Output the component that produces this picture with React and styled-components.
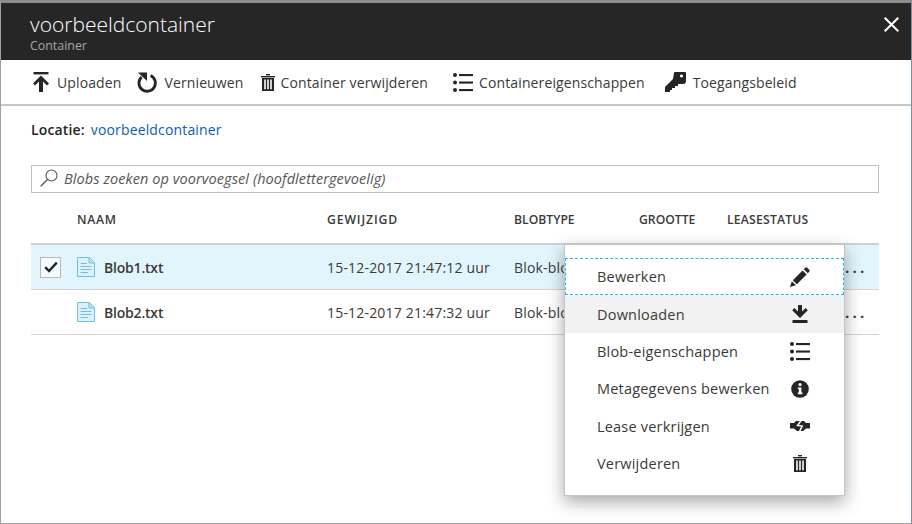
import styled, { createGlobalStyle } from "styled-components";

const GlobalStyle = createGlobalStyle`
  html, body {
    margin: 0;
    padding: 0;
    background: #fff;
  }
  body {
    font-family: "Open Sans", "Noto Sans", sans-serif;
    color: #252525;
  }
`;

const toolbarItems = [
  { label: "Uploaden", icon: <UploadIcon />, gap: 16, iconGap: 8 },
  { label: "Vernieuwen", icon: <RefreshIcon />, gap: 18, iconGap: 7 },
  { label: "Container verwijderen", icon: <TrashIcon size={14} height={17} />, gap: 25, iconGap: 5 },
  { label: "Containereigenschappen", icon: <ListIcon size={20} />, gap: 20, iconGap: 6 },
  { label: "Toegangsbeleid", icon: <KeyIcon />, gap: 0, iconGap: 7 },
];

const tableColumns = [
  { label: "NAAM", spacing: 0.7 },
  { label: "GEWIJZIGD", spacing: 0.9 },
  { label: "BLOBTYPE", spacing: 0 },
  { label: "GROOTTE", spacing: 0 },
  { label: "LEASESTATUS", spacing: 0.2 },
];

const blobs = [
  { name: "Blob1.txt", modified: "15-12-2017 21:47:12 uur", selected: true },
  { name: "Blob2.txt", modified: "15-12-2017 21:47:32 uur", selected: false },
];

const menuItems = [
  { label: "Bewerken", icon: <PencilIcon />, focused: true },
  { label: "Downloaden", icon: <DownloadIcon />, hovered: true },
  { label: "Blob-eigenschappen", icon: <ListIcon size={20} /> },
  { label: "Metagegevens bewerken", icon: <InfoIcon /> },
  { label: "Lease verkrijgen", icon: <LeaseIcon /> },
  { label: "Verwijderen", icon: <TrashIcon size={14} height={17} /> },
];

function UploadIcon() {
  return (
    <svg width="16" height="20" viewBox="0 0 16 20" fill="#252525">
      <rect x="0.5" y="0" width="15" height="2.4" />
      <path d="M8 3.6 L16 11.4 L14 13.4 L10 9.6 L10 20 L6 20 L6 9.6 L2 13.4 L0 11.4 Z" />
    </svg>
  );
}

function RefreshIcon() {
  return (
    <svg width="20" height="21" viewBox="0 0 20 21" fill="none">
      <path d="M4.6 5 A8.2 8.2 0 1 0 13.6 3.6" stroke="#252525" strokeWidth="2.8" />
      <path d="M1 0.5 L10 0.5 L10 9 Z" fill="#252525" />
    </svg>
  );
}

function TrashIcon({ size, height }) {
  return (
    <svg width={size} height={height} viewBox="0 0 14 17" fill="#252525">
      <rect x="5" y="0" width="4" height="1.4" />
      <rect x="0" y="2" width="14" height="1.4" />
      <path d="M1 4 H13 V17 H1 Z M3.2 5.6 V15.2 H4.8 V5.6 Z M6.2 5.6 V15.2 H7.8 V5.6 Z M9.2 5.6 V15.2 H10.8 V5.6 Z" fillRule="evenodd" />
    </svg>
  );
}

function ListIcon({ size }) {
  return (
    <svg width={size} height={size * 0.95} viewBox="0 0 20 19" fill="#252525">
      <circle cx="2" cy="2" r="2" />
      <circle cx="2" cy="9.5" r="2" />
      <circle cx="2" cy="17" r="2" />
      <rect x="6" y="1" width="14" height="2.1" />
      <rect x="6" y="8.5" width="14" height="2.1" />
      <rect x="6" y="16" width="14" height="2.1" />
    </svg>
  );
}

function KeyIcon() {
  return (
    <svg width="21" height="20" viewBox="0 0 21 20" fill="#252525">
      <path d="M9 1 Q9 0 10 0 H20 Q21 0 21 1 V9 Q21 12 18 12 H13 V14 H10 V16 H7 V18 H5 V20 H0 V15 L8 7 Z M16.5 2.4 a1.6 1.6 0 1 0 0.01 0 Z" fillRule="evenodd" />
    </svg>
  );
}

function SearchIcon() {
  return (
    <svg width="18" height="18" viewBox="0 0 18 18" fill="none" stroke="#555">
      <circle cx="11.5" cy="6.5" r="5.5" strokeWidth="1.1" />
      <path d="M7.5 10.5 L0.7 17.3" strokeWidth="1.3" />
    </svg>
  );
}

function FileIcon() {
  return (
    <svg width="18" height="20" viewBox="0 0 18 20">
      <path d="M0.5 0.5 H12.5 L17.5 5.5 V19.5 H0.5 Z" fill="#dff0f9" stroke="#6cc0e6" />
      <path d="M12 0.5 V6 H17.5" fill="#b8e0f3" stroke="#6cc0e6" />
      <path d="M3.5 6.5 H10 M3.5 9.5 H14.5 M3.5 12.5 H14.5 M3.5 15.5 H11" stroke="#6cc0e6" strokeWidth="1" />
    </svg>
  );
}

function CheckIcon() {
  return (
    <svg width="14" height="12" viewBox="0 0 14 12" fill="none">
      <path d="M1.2 6.2 L5 10 L12.8 1.6" stroke="#252525" strokeWidth="2.4" />
    </svg>
  );
}

function PencilIcon() {
  return (
    <svg width="20" height="20" viewBox="0 0 20 20" fill="#252525">
      <path d="M0 20 L1.8 14.2 L5.8 18.2 Z" />
      <path d="M2.8 13.2 L12.6 3.4 L16.6 7.4 L6.8 17.2 Z" />
      <path d="M13.8 2.2 L15.2 0.8 Q16.2 -0.1 17.2 0.8 L19.2 2.8 Q20.1 3.8 19.2 4.8 L17.8 6.2 Z" />
    </svg>
  );
}

function DownloadIcon() {
  return (
    <svg width="16" height="18" viewBox="0 0 16 18" fill="#252525">
      <path d="M6 0 H10 V6.4 L13.6 3 L15.8 5.2 L8 13 L0.2 5.2 L2.4 3 L6 6.4 Z" />
      <rect x="0.5" y="15" width="15" height="3" />
    </svg>
  );
}

function InfoIcon() {
  return (
    <svg width="18" height="18" viewBox="0 0 18 18">
      <circle cx="9" cy="9" r="8.8" fill="#252525" />
      <circle cx="9" cy="4.6" r="1.6" fill="#fff" />
      <path d="M6.8 7.4 H10.4 V12.6 H11.4 V14.2 H6.8 V12.6 H7.8 V9 H6.8 Z" fill="#fff" />
    </svg>
  );
}

function LeaseIcon() {
  return (
    <svg width="20" height="12" viewBox="0 0 20 12">
      <path d="M0 3 H4 L6 1 H14 L16 3 H20 V8.4 H16 L13 11 H7 L4 8.4 H0 Z" fill="#252525" />
      <path d="M11.4 0 L7.6 5.4 L12.2 6 L9.2 12" fill="none" stroke="#fff" strokeWidth="1.5" />
    </svg>
  );
}

function CloseIcon() {
  return (
    <svg width="15" height="15" viewBox="0 0 15 15" fill="none">
      <path d="M0.7 0.7 L14.3 14.3 M14.3 0.7 L0.7 14.3" stroke="#fff" strokeWidth="2" />
    </svg>
  );
}

export default function App() {
  return (
    <>
      <GlobalStyle />
      <Blade>
        <Header>
          <div>
            <Title>voorbeeldcontainer</Title>
            <Subtitle>Container</Subtitle>
          </div>
          <CloseButton>
            <CloseIcon />
          </CloseButton>
        </Header>
        <Toolbar>
          {toolbarItems.map((item) => (
            <ToolbarButton key={item.label} $gap={item.gap} $iconGap={item.iconGap}>
              {item.icon}
              <span>{item.label}</span>
            </ToolbarButton>
          ))}
        </Toolbar>
        <Content>
          <Location>
            <strong>Locatie:</strong>
            <a>voorbeeldcontainer</a>
          </Location>
          <SearchBox>
            <SearchIcon />
            <span>Blobs zoeken op voorvoegsel (hoofdlettergevoelig)</span>
          </SearchBox>
          <TableHead>
            <span />
            {tableColumns.map((column) => (
              <HeadCell key={column.label} $spacing={column.spacing}>
                {column.label}
              </HeadCell>
            ))}
            <span />
          </TableHead>
          {blobs.map((blob) => (
            <TableRow key={blob.name} $selected={blob.selected}>
              <span>
                {blob.selected && (
                  <Checkbox>
                    <CheckIcon />
                  </Checkbox>
                )}
              </span>
              <NameCell>
                <FileIcon />
                <b>{blob.name}</b>
              </NameCell>
              <span>{blob.modified}</span>
              <span>Blok-blob</span>
              <span />
              <span />
              <Dots>...</Dots>
            </TableRow>
          ))}
        </Content>
        <ContextMenu>
          {menuItems.map((item) => (
            <MenuItem key={item.label} $focused={item.focused} $hovered={item.hovered}>
              <span>{item.label}</span>
              <MenuIcon>{item.icon}</MenuIcon>
            </MenuItem>
          ))}
        </ContextMenu>
      </Blade>
    </>
  );
}

const Blade = styled.div`
  position: relative;
  box-sizing: border-box;
  width: 912px;
  height: 524px;
  overflow: hidden;
  background: #fff;
  border-top: 3px solid #8c8c8c;
  border-left: 1px solid #a0a0a0;
  border-right: 1px solid #7d8fa0;
  border-bottom: 1px solid #a0a0a0;
`;

const Header = styled.header`
  display: flex;
  justify-content: space-between;
  height: 57px;
  padding: 6px 12px 0 29px;
  box-sizing: border-box;
  background: #262626;
  color: #fff;
`;

const Title = styled.div`
  font-size: 21px;
  font-weight: 300;
  line-height: 30px;
  letter-spacing: 0;
`;

const Subtitle = styled.div`
  font-size: 12.4px;
  line-height: 13px;
  color: #a6a6a6;
`;

const CloseButton = styled.div`
  padding-top: 6px;
`;

const Toolbar = styled.div`
  display: flex;
  align-items: center;
  height: 46px;
  padding-left: 32px;
  box-sizing: border-box;
  border-bottom: 2px solid #c6c6c6;
`;

const ToolbarButton = styled.div`
  display: flex;
  align-items: center;
  gap: ${(props) => props.$iconGap}px;
  margin-right: ${(props) => props.$gap}px;
  font-size: 14px;
  color: #3a3a3a;
  letter-spacing: 0.12px;
`;

const Content = styled.div`
  padding: 0 32px 0 30px;
`;

const Location = styled.div`
  display: flex;
  gap: 6px;
  margin-top: 13px;
  height: 20px;
  align-items: center;
  font-size: 14px;
  letter-spacing: 0.15px;

  & strong {
    font-weight: 600;
  }

  & a {
    color: #0b5cad;
  }
`;

const SearchBox = styled.div`
  display: flex;
  align-items: center;
  gap: 6px;
  box-sizing: border-box;
  height: 28px;
  margin-top: 26px;
  padding: 0 0 2px 8px;
  border: 1px solid #c0c0c0;
  font-size: 14.5px;
  font-style: italic;
  color: #555;
  letter-spacing: 0.08px;
`;

const columns = "46px 250px 187px 125px 88px 118px 1fr";

const TableHead = styled.div`
  display: grid;
  grid-template-columns: ${columns};
  align-items: center;
  height: 52px;
  padding-top: 2px;
  box-sizing: border-box;
  border-bottom: 2px solid #d0d0d0;
  font-size: 12.2px;
  font-weight: 600;
  color: #3a3a3a;
`;

const HeadCell = styled.span`
  letter-spacing: ${(props) => props.$spacing}px;
`;

const TableRow = styled.div`
  display: grid;
  grid-template-columns: ${columns};
  align-items: center;
  height: 45px;
  box-sizing: border-box;
  border-bottom: 1px solid #d4d4d4;
  background: ${(props) => (props.$selected ? "#e3f5fc" : "#fff")};
  font-size: 14px;
  color: #3a3a3a;
  letter-spacing: 0.19px;
`;

const Checkbox = styled.div`
  display: flex;
  align-items: center;
  justify-content: center;
  width: 21px;
  height: 21px;
  margin-left: 9px;
  box-sizing: border-box;
  border: 1px solid #b8b8b8;
  background: #f4fbfe;
`;

const NameCell = styled.div`
  display: flex;
  align-items: center;
  gap: 9px;

  & b {
    font-weight: 600;
    letter-spacing: -0.2px;
  }
`;

const Dots = styled.span`
  font-size: 15px;
  font-weight: 700;
  letter-spacing: 3.2px;
  text-align: right;
  padding-right: 13px;
`;

const ContextMenu = styled.div`
  position: absolute;
  left: 563px;
  top: 241px;
  width: 281px;
  height: 252px;
  box-sizing: border-box;
  padding-top: 13px;
  background: #fff;
  border: 1px solid #c4c4c4;
  box-shadow: 0 6px 16px rgba(0, 0, 0, 0.35);
`;

const MenuItem = styled.div`
  display: flex;
  align-items: center;
  justify-content: space-between;
  height: 37.4px;
  box-sizing: border-box;
  padding: 0 34px 0 32px;
  font-size: 14.5px;
  color: #3a3a3a;
  letter-spacing: 0.2px;
  background: ${(props) => (props.$hovered ? "#f2f2f2" : "transparent")};
  outline: ${(props) => (props.$focused ? "1px dashed #15bdf0" : "none")};
  outline-offset: -1px;
`;

const MenuIcon = styled.span`
  display: flex;
  justify-content: center;
  width: 20px;
`;
